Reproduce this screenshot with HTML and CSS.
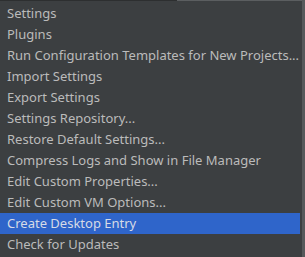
FILE: index.html
```html
<!DOCTYPE html>
<html lang="en">
<head>
    <meta charset="UTF-8">
    <title>Configure</title>
    <link rel="stylesheet" href="styles.css">
</head>
<body>
<div class="popup">
    <div class="edge"><span class="edge-dark"></span><span class="edge-light"></span></div>
    <ul class="menu">
        <li>Settings</li>
        <li>Plugins</li>
        <li>Run Configuration Templates for New Projects...</li>
        <li>Import Settings</li>
        <li>Export Settings</li>
        <li>Settings Repository...</li>
        <li>Restore Default Settings...</li>
        <li>Compress Logs and Show in File Manager</li>
        <li>Edit Custom Properties...</li>
        <li>Edit Custom VM Options...</li>
        <li class="active">Create Desktop Entry</li>
        <li>Check for Updates</li>
    </ul>
</div>
</body>
</html>
```

FILE: styles.css
```css
*{
    margin:0;
    padding:0;
}
html,body{
    width:305px;
    height:257px;
    overflow:hidden;
    background:#3c3f41;
}
ul,li{
    list-style:none;
}
.popup{
    width:302px;
    height:257px;
    border-right:3px solid #56595b;
    box-sizing:content-box;
}
.edge{
    display:flex;
    height:1px;
}
.edge-dark{
    width:177px;
    background:#2d2f30;
}
.edge-light{
    flex:1;
    background:#5b5e60;
}
.menu{
    padding-top:2px;
    width:300px;
    font-family:"Noto Sans","Open Sans",sans-serif;
    font-size:13px;
    color:#bbbbbb;
}
.menu li{
    height:21px;
    line-height:21px;
    padding-left:7px;
    white-space:nowrap;
}
.menu li.active{
    background:#2f65ca;
    color:#d6dbe6;
}
```
